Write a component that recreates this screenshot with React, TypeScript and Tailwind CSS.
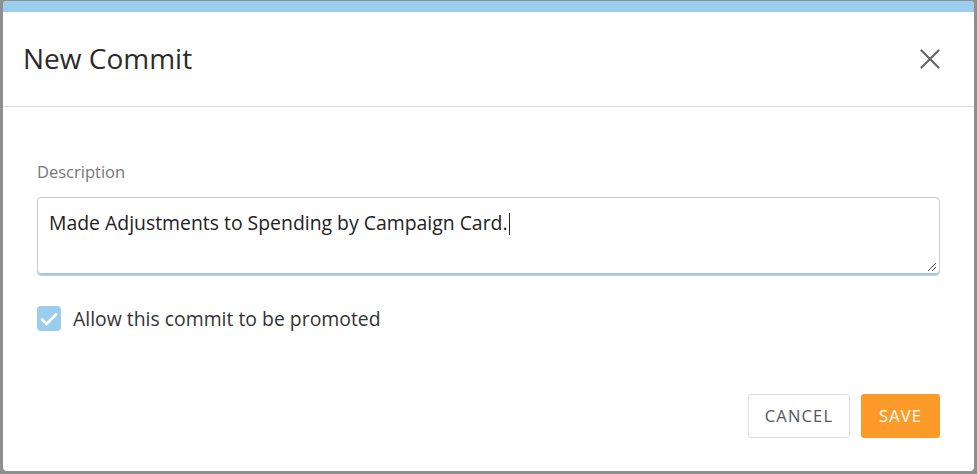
import React from "react";

export default function App() {
  return (
    <div
      className="w-[977px] h-[474px] bg-[#8f8f8f] overflow-hidden pt-px px-[3px]"
      style={{ fontFamily: '"Open Sans", "Noto Sans", sans-serif' }}
    >
      <div className="w-[971px] h-[470px] bg-white rounded-[4px] overflow-hidden flex flex-col">
        <div className="h-[11px] bg-[#9bcdee] shrink-0" />
        <div className="h-[95px] shrink-0 flex items-center justify-between pl-[20px] pr-[34px] border-b border-[#dcdcdc] pb-[2px]">
          <h1 className="text-[28px] text-[#2b2b2b] font-medium leading-none">New Commit</h1>
          <svg width="20" height="20" viewBox="0 0 20 20" className="mt-[1px]">
            <path d="M1.5 1.5 L18.5 18.5 M18.5 1.5 L1.5 18.5" stroke="#666" strokeWidth="2.2" strokeLinecap="round" />
          </svg>
        </div>
        <div className="flex-1 flex flex-col px-[34px] pt-[55px]">
          <label className="text-[16.5px] text-[#777] leading-5">Description</label>
          <div className="mt-[15px] h-[79px] border border-[#cccccc] rounded-[4px] shadow-[inset_0_-2px_0_#9bcdee] relative px-[11px] pt-[13px]">
            <span className="text-[19.4px] text-[#222] leading-6">
              Made Adjustments to Spending by Campaign Card.
            </span>
            <span className="inline-block w-px h-[22px] bg-[#222] align-middle ml-px -mt-[3px]" />
            <svg width="10" height="10" viewBox="0 0 10 10" className="absolute right-[2px] bottom-[3px]">
              <path d="M9 1 L1 9 M9 5 L5 9" stroke="#555" strokeWidth="1" />
            </svg>
          </div>
          <div className="mt-[30px] flex items-center gap-[12px]">
            <div className="w-[24px] h-[25px] rounded-[4px] bg-[#9bcdee] flex items-center justify-center">
              <svg width="18" height="14" viewBox="0 0 18 14">
                <path d="M2 7.5 L6.5 12 L16 2.5" stroke="white" strokeWidth="2.6" fill="none" strokeLinecap="round" strokeLinejoin="round" />
              </svg>
            </div>
            <span className="text-[19.4px] text-[#333] leading-6">Allow this commit to be promoted</span>
          </div>
          <div className="mt-[63px] flex justify-end gap-[11px]">
            <button className="w-[102px] h-[44px] border border-[#dddddd] rounded-[3px] bg-white text-[16.5px] text-[#555] tracking-[0.07em]">
              CANCEL
            </button>
            <button className="w-[79px] h-[44px] rounded-[3px] bg-[#fd9b2a] text-[16.5px] text-white font-medium tracking-[0.07em]">
              SAVE
            </button>
          </div>
        </div>
      </div>
    </div>
  );
}
